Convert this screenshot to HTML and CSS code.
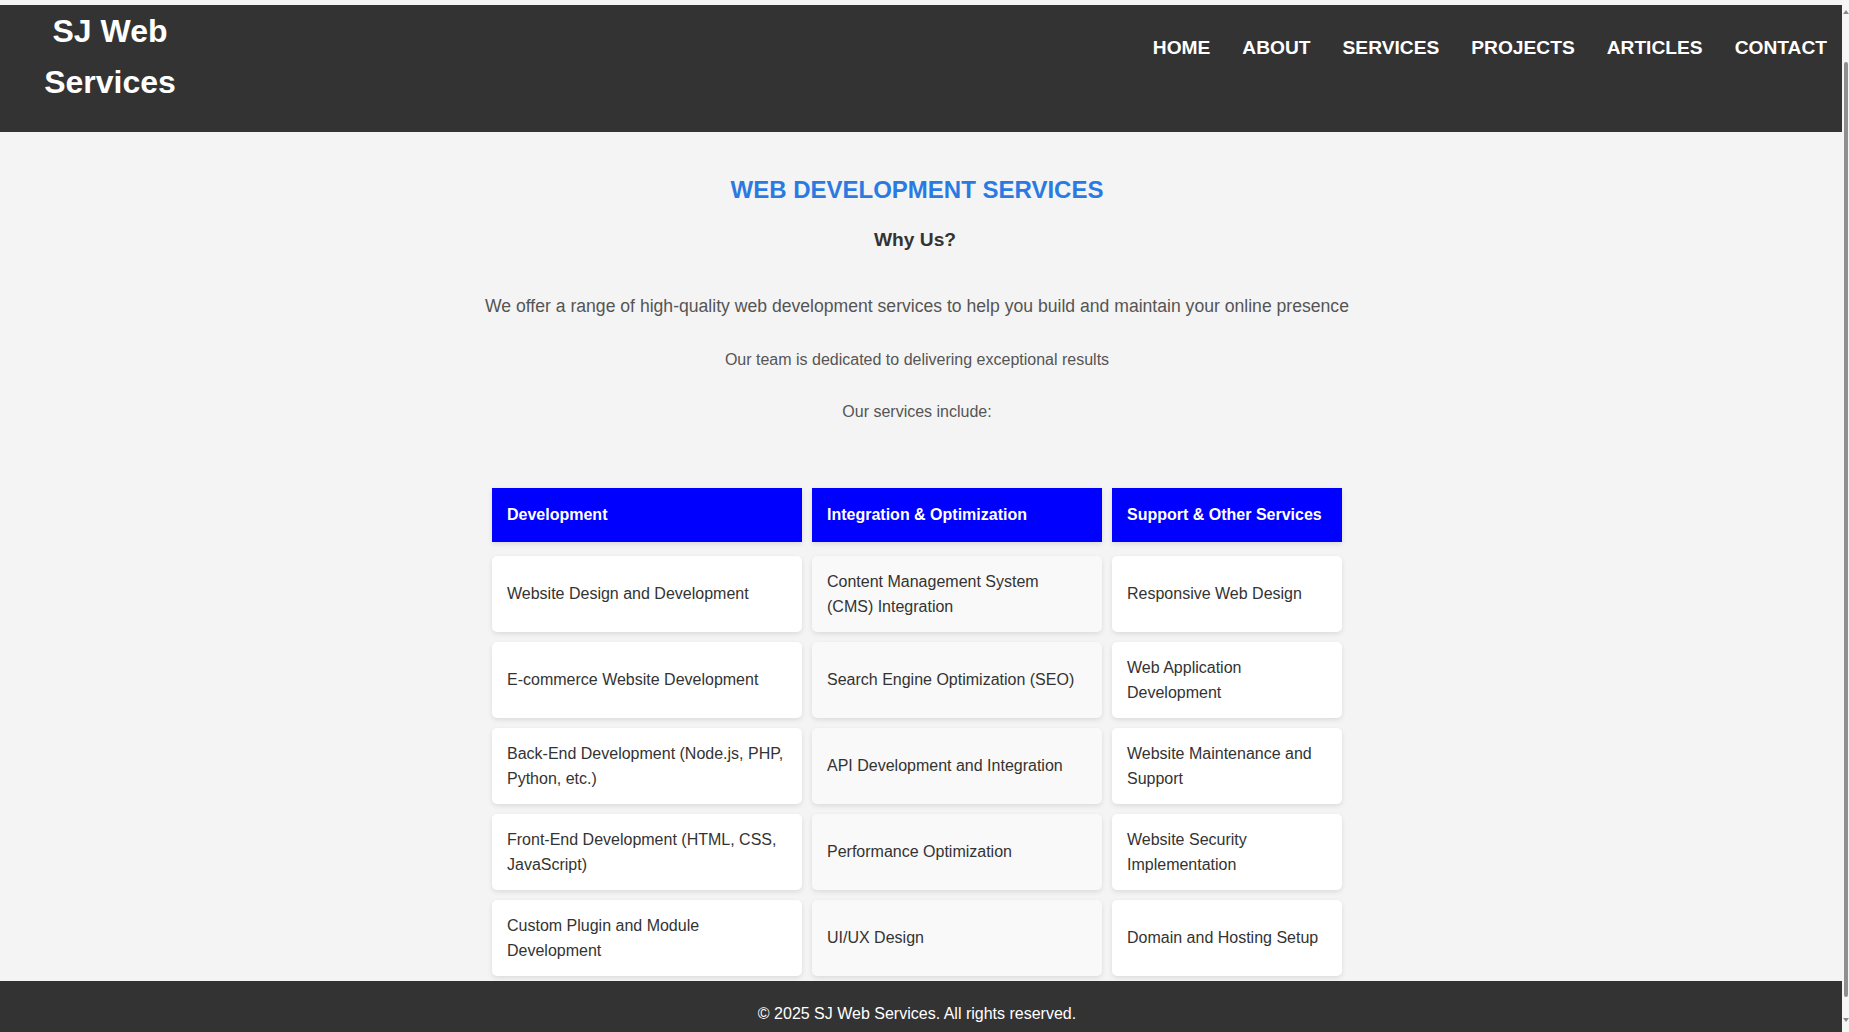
FILE: index.html
```html
<!DOCTYPE html>
<html lang="en">
<head>
<meta charset="utf-8">
<title>SJ Web Services - Web Development Services</title>
<link rel="stylesheet" href="styles.css">
</head>
<body>
<div class="page">
  <header class="site-header">
    <div class="logo">SJ Web Services</div>
    <nav class="main-nav">
      <ul>
        <li><a href="#">HOME</a></li>
        <li><a href="#">ABOUT</a></li>
        <li><a href="#">SERVICES</a></li>
        <li><a href="#">PROJECTS</a></li>
        <li><a href="#">ARTICLES</a></li>
        <li><a href="#">CONTACT</a></li>
      </ul>
    </nav>
  </header>

  <main class="content">
    <h2 class="page-title">WEB DEVELOPMENT SERVICES</h2>
    <h3 class="why">Why Us?</h3>
    <p class="lead">We offer a range of high-quality web development services to help you build and maintain your online presence</p>
    <p class="note note-team">Our team is dedicated to delivering exceptional results</p>
    <p class="note note-include">Our services include:</p>

    <div class="services">
      <div class="col-head">Development</div>
      <div class="col-head">Integration &amp; Optimization</div>
      <div class="col-head">Support &amp; Other Services</div>

      <div class="card">Website Design and Development</div>
      <div class="card card-alt">Content Management System (CMS) Integration</div>
      <div class="card">Responsive Web Design</div>

      <div class="card">E-commerce Website Development</div>
      <div class="card card-alt">Search Engine Optimization (SEO)</div>
      <div class="card">Web Application Development</div>

      <div class="card">Back-End Development (Node.js, PHP, Python, etc.)</div>
      <div class="card card-alt">API Development and Integration</div>
      <div class="card">Website Maintenance and Support</div>

      <div class="card">Front-End Development (HTML, CSS, JavaScript)</div>
      <div class="card card-alt">Performance Optimization</div>
      <div class="card">Website Security Implementation</div>

      <div class="card">Custom Plugin and Module Development</div>
      <div class="card card-alt">UI/UX Design</div>
      <div class="card">Domain and Hosting Setup</div>
    </div>
  </main>

  <footer class="site-footer">
    <p>&copy; 2025 SJ Web Services. All rights reserved.</p>
  </footer>
</div>

<div class="scrollbar" aria-hidden="true">
  <span class="sb-up"></span>
  <span class="sb-thumb"></span>
  <span class="sb-down"></span>
</div>
</body>
</html>
```

FILE: styles.css
```css
html, body {
  margin: 0;
  padding: 0;
  overflow: hidden;
}

body {
  background: #f4f4f4;
  font-family: "Liberation Sans", Arial, sans-serif;
  font-size: 16px;
  line-height: 1.6;
  color: #333;
}

.page {
  padding-top: 5px;
}

/* Header */
.site-header {
  background: #333;
  height: 127px;
  display: flex;
  justify-content: space-between;
  align-items: flex-start;
  padding-right: 22px;
}

.logo {
  width: 180px;
  margin-left: 20px;
  padding-top: 1px;
  text-align: center;
  color: #fff;
  font-weight: bold;
  font-size: 32px;
  line-height: 51.2px;
}

.main-nav ul {
  list-style: none;
  margin: 28px 0 0;
  padding: 0;
  display: flex;
  gap: 32px;
}

.main-nav a {
  color: #fff;
  text-decoration: none;
  font-weight: bold;
  font-size: 19.2px;
  line-height: 30.72px;
}

/* Main */
.content {
  padding-right: 15px;
  text-align: center;
}

.page-title {
  margin: 38.8px 0 0;
  font-size: 24px;
  line-height: 38.4px;
  color: #2a7ae2;
}

.why {
  margin: 15.9px 0 0;
  padding-right: 4px;
  font-size: 19.2px;
  line-height: 30.72px;
  color: #333;
}

.lead {
  margin: 36.5px 0 0;
  font-size: 17.6px;
  line-height: 28.16px;
  color: #555;
}

.note {
  margin: 0;
  font-size: 16px;
  line-height: 25.6px;
  color: #555;
}

.note-team {
  margin-top: 26.6px;
}

.note-include {
  margin-top: 26.6px;
}

.services {
  margin-top: 62.8px;
  display: grid;
  grid-template-columns: 310px 290px 230px;
  column-gap: 10px;
  row-gap: 10px;
  justify-content: center;
  text-align: left;
}

.col-head {
  background: #0000ff;
  color: #fff;
  font-weight: bold;
  padding: 14.5px 15px;
  line-height: 25.6px;
  margin-bottom: 4px;
  box-shadow: 0 2px 5px rgba(0, 0, 0, 0.1);
}

.card {
  background: #fff;
  border-radius: 5px;
  padding: 12.4px 15px;
  line-height: 25.6px;
  color: #333;
  display: flex;
  align-items: center;
  box-shadow: 0 2px 5px rgba(0, 0, 0, 0.1);
}

.card-alt {
  background: #f9f9f9;
}

/* Footer */
.site-footer {
  margin-top: 5px;
  background: #333;
  color: #fff;
  text-align: center;
  padding: 20px 35px 20px 20px;
}

.site-footer p {
  margin: 0;
  font-size: 16px;
  line-height: 25.6px;
}

/* Overlay scrollbar */
.scrollbar {
  position: fixed;
  top: 0;
  right: 0;
  width: 7px;
  height: 100%;
  background: #f6f6f6;
}

.sb-up {
  position: absolute;
  top: 10px;
  left: 1px;
  width: 0;
  height: 0;
  border-left: 3px solid transparent;
  border-right: 3px solid transparent;
  border-bottom: 4px solid #8a8a8a;
}

.sb-down {
  position: absolute;
  bottom: 10px;
  left: 1px;
  width: 0;
  height: 0;
  border-left: 3px solid transparent;
  border-right: 3px solid transparent;
  border-top: 4px solid #8a8a8a;
}

.sb-thumb {
  position: absolute;
  top: 62px;
  left: 2px;
  width: 4px;
  height: 935px;
  border-radius: 2px;
  background: #8f8f8f;
}
```
